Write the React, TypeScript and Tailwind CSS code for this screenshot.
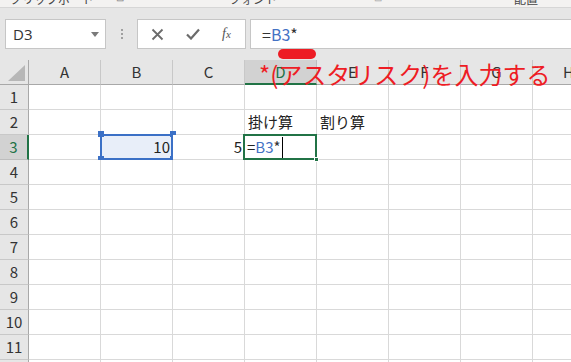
import { Fragment } from 'react'

const cols = ['A', 'B', 'C', 'D', 'E', 'F', 'G', 'H']
const rows = [1, 2, 3, 4, 5, 6, 7, 8, 9, 10, 11, 12]

const font = { fontFamily: '"Noto Sans CJK JP", "Noto Sans", sans-serif' }

function Handle({ pos }: { pos: string }) {
  return <span className={`absolute w-[6px] h-[6px] bg-[#3b70c6] ${pos}`} />
}

function Cell({ col, row }: { col: string; row: number }) {
  const base = 'relative h-[25px] border-r border-b border-[#d9d9d9] bg-white text-[15px] leading-[24px] text-[#222] whitespace-nowrap'
  if (row === 2 && col === 'D') return <div className={`${base} pl-[3px]`}>掛け算</div>
  if (row === 2 && col === 'E') return <div className={`${base} pl-[3px]`}>割り算</div>
  if (row === 3 && col === 'B') {
    return (
      <div className={`${base} text-right pr-[2px]`}>
        <div className="absolute -left-[1px] -top-[1px] -right-[1px] -bottom-[1px] border-2 border-[#3b70c6] bg-[#e8eef9]" />
        <span className="relative">10</span>
        <Handle pos="-left-[3px] -top-[4px]" />
        <Handle pos="-right-[4px] -top-[4px]" />
        <Handle pos="-left-[3px] -bottom-[3px]" />
        <Handle pos="-right-[4px] -bottom-[3px]" />
      </div>
    )
  }
  if (row === 3 && col === 'C') return <div className={`${base} text-right pr-[2px]`}>5</div>
  if (row === 3 && col === 'D') {
    return (
      <div className={base}>
        <div className="absolute -left-[2px] -top-[1px] -right-[1px] -bottom-[1px] border-2 border-[#217346] z-10" />
        <div className="relative flex items-center h-full pl-[2px]">
          <span className="text-[#222]">=</span>
          <span className="text-[#4472c4]">B3</span>
          <span className="text-[#333]">*</span>
          <span className="ml-[1px] w-[1px] h-[21px] bg-black" />
        </div>
        <span className="absolute -right-[3px] -bottom-[3px] w-[5px] h-[5px] bg-[#217346] border border-white z-20" />
      </div>
    )
  }
  return <div className={base} />
}

export default function App() {
  return (
    <div className="w-[571px] h-[362px] overflow-hidden bg-white relative" style={font}>
      {/* ribbon group labels, cut off */}
      <div className="h-[8px] bg-[#f3f2f1] border-b border-[#d6d6d6] overflow-hidden flex text-[12px] leading-[12px] text-[#444]">
        <span className="ml-[10px] -mt-[7px]">クリップボード</span>
        <span className="ml-[22px] -mt-[9px] text-[10px] text-[#888]">⊡</span>
        <span className="ml-[105px] -mt-[7px]">フォント</span>
        <span className="ml-[97px] -mt-[9px] text-[10px] text-[#aaa]">⊡</span>
        <span className="ml-[132px] -mt-[7px]">配置</span>
      </div>

      {/* formula bar */}
      <div className="h-[52px] bg-[#e6e6e6] flex items-start pt-[11px] pl-[5px] relative">
        <div className="w-[101px] h-[30px] bg-white border border-[#c6c6c6] flex items-center justify-between pl-[7px] pr-[6px]">
          <span className="text-[15px] text-[#333]" style={{ fontFamily: '"Open Sans", "Noto Sans", sans-serif' }}>D3</span>
          <svg width="8" height="5" viewBox="0 0 8 5"><path d="M0 0h8L4 5z" fill="#7a7a7a" /></svg>
        </div>
        <div className="w-[31px] h-[30px] flex flex-col items-center justify-center gap-[2px]">
          <span className="w-[2px] h-[2px] bg-[#a0a0a0]" />
          <span className="w-[2px] h-[2px] bg-[#a0a0a0]" />
          <span className="w-[2px] h-[2px] bg-[#a0a0a0]" />
        </div>
        <div className="w-[109px] h-[30px] bg-white border border-[#c6c6c6] flex items-center pl-[13px] gap-[22px]">
          <svg width="13" height="13" viewBox="0 0 13 13"><path d="M1.5 1.5l10 10M11.5 1.5l-10 10" stroke="#6b6b6b" strokeWidth="1.8" /></svg>
          <svg width="14" height="12" viewBox="0 0 14 12"><path d="M1 6.5l4 4L13 1.5" stroke="#6b6b6b" strokeWidth="2.2" fill="none" /></svg>
          <span className="text-[14px] italic text-[#555] leading-none" style={{ fontFamily: '"Liberation Serif", serif' }}>
            f<span className="text-[11px]">x</span>
          </span>
        </div>
        <div className="ml-[4px] flex-1 h-[30px] bg-white border border-[#c6c6c6] border-r-0 flex items-center pl-[11px] text-[16px]">
          <span className="text-[#333]">=</span>
          <span className="text-[#4472c4]">B3</span>
          <span className="text-[#333]">*</span>
        </div>
        <span className="absolute left-[278px] top-[41px] w-[38px] h-[10px] rounded-full bg-[#ed1c24]" />
      </div>

      {/* sheet grid */}
      <div className="grid grid-cols-[29px_repeat(8,72px)]">
        <div className="h-[25px] bg-[#e6e6e6] border-r border-b border-[#a8a8a8] flex items-end justify-end pr-[3px] pb-[3px]">
          <svg width="17" height="16" viewBox="0 0 17 16"><path d="M17 0V16H0z" fill="#b7b7b7" /></svg>
        </div>
        {cols.map((c) =>
          c === 'D' ? (
            <div key={c} className="h-[25px] bg-[#d2d2d2] border-r border-[#bdbdbd] border-b-2 border-b-[#217346] text-center text-[15px] leading-[24px] text-[#217346]">
              {c}
            </div>
          ) : (
            <div key={c} className="h-[25px] bg-[#e6e6e6] border-r border-b border-r-[#c8c8c8] border-b-[#a8a8a8] text-center text-[15px] leading-[24px] text-[#333]">
              {c}
            </div>
          )
        )}
        {rows.map((r) => (
          <Fragment key={r}>
            {r === 3 ? (
              <div className="h-[25px] bg-[#d2d2d2] border-r-2 border-r-[#217346] border-b border-b-[#bdbdbd] text-center text-[15px] leading-[24px] text-[#217346]">
                {r}
              </div>
            ) : (
              <div className="h-[25px] bg-[#e6e6e6] border-r border-b border-r-[#a8a8a8] border-b-[#c8c8c8] text-center text-[15px] leading-[24px] text-[#333]">
                {r}
              </div>
            )}
            {cols.map((c) => (
              <Cell key={c} col={c} row={r} />
            ))}
          </Fragment>
        ))}
      </div>

      {/* red annotation */}
      <div className="absolute left-[259px] top-[58px] text-[24px] leading-[32px] text-[#ee1c24] whitespace-nowrap z-30">
        *(アスタリスク)を入力する
      </div>
    </div>
  )
}
